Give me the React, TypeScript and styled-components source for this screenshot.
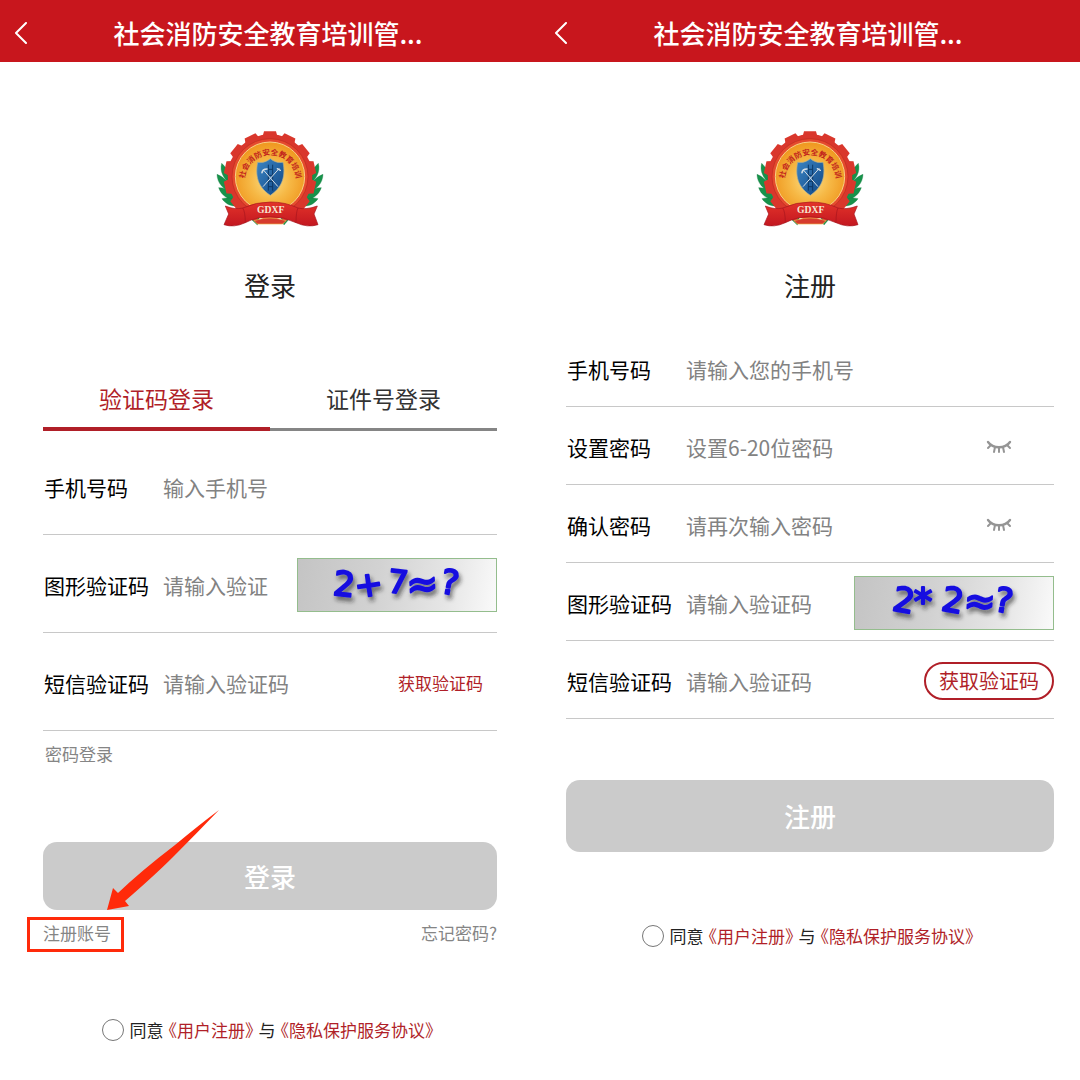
import React, { useId, useState } from 'react';
import styled, { createGlobalStyle } from 'styled-components';

const RED = '#c8161d';
const DEEP_RED = '#b01f28';
const MARK = '#ff2a0a';

const GlobalStyle = createGlobalStyle`
  *, *::before, *::after { box-sizing: border-box; }
  body {
    margin: 0;
    background: #fff;
    color: #222;
    font-family: "Noto Sans CJK SC", "Noto Sans", sans-serif;
  }
  button, input { font-family: inherit; margin: 0; }
`;

const Screens = styled.main`
  display: grid;
  grid-template-columns: 1fr 1fr;
  min-height: 100vh;
`;

const Screen = styled.section`
  display: flex;
  flex-direction: column;
  min-width: 0;
  background: #fff;
`;

const Header = styled.header`
  display: grid;
  grid-template-columns: 48px 1fr 52px;
  align-items: center;
  height: 62px;
  padding-top: 3px;
  background: ${RED};
  color: #fff;
`;

const BackButton = styled.button`
  display: flex;
  justify-content: flex-start;
  padding: 8px 14px;
  border: 0;
  background: none;
  color: inherit;
`;

const HeaderTitle = styled.h1`
  margin: 0;
  font-size: 26px;
  font-weight: 500;
  line-height: 36px;
  text-align: center;
  white-space: nowrap;
`;

const Body = styled.form<{ $gutter: number }>`
  display: flex;
  flex-direction: column;
  padding: 68px ${(p) => p.$gutter}px 0;
`;

const Emblem = styled.svg`
  display: block;
  align-self: center;
  width: 110px;
  height: 98px;
`;

const Title = styled.h2`
  margin: 39px 0 0;
  font-size: 26px;
  font-weight: 400;
  line-height: 36px;
  text-align: center;
`;

const Tabs = styled.div`
  display: grid;
  grid-template-columns: 1fr 1fr;
  align-items: end;
  margin: 73px 0 6px;
`;

const Tab = styled.button<{ $active: boolean }>`
  height: 55px;
  padding: 0 0 ${(p) => (p.$active ? 7 : 8)}px;
  border: 0;
  border-bottom: ${(p) => (p.$active ? `4px solid ${DEEP_RED}` : '3px solid #858585')};
  background: none;
  color: ${(p) => (p.$active ? DEEP_RED : '#333')};
  font-size: 23px;
  line-height: 44px;
`;

const Fields = styled.div<{ $top?: number }>`
  display: flex;
  flex-direction: column;
  margin-top: ${(p) => p.$top ?? 0}px;
`;

const Row = styled.div<{ $height: number }>`
  display: flex;
  align-items: center;
  height: ${(p) => p.$height}px;
  padding-top: 2px;
  border-bottom: 1px solid #c8c8c8;
`;

const FieldLabel = styled.label`
  flex: 0 0 120px;
  padding-left: 1px;
  color: #000;
  font-size: 21px;
  line-height: 32px;
  white-space: nowrap;
`;

const Field = styled.input`
  flex: 1 1 0;
  min-width: 0;
  height: 32px;
  padding: 0;
  border: 0;
  outline: 0;
  background: none;
  color: #222;
  font-size: 21px;
  line-height: 32px;
  &::placeholder { color: #828282; opacity: 1; }
`;

const CaptchaButton = styled.button`
  flex: none;
  width: 200px;
  height: 54px;
  margin: 0 0 0 26px;
  padding: 0;
  border: 1px solid #94bd8d;
  background: linear-gradient(100deg, #c4c4c4 0%, #d2d2d2 40%, #e6e6e6 75%, #fafafa 100%);
`;

const CaptchaArt = styled.svg`
  display: block;
  width: 100%;
  height: 100%;
`;

const TextButton = styled.button<{ $tone?: string }>`
  padding: 0;
  border: 0;
  background: none;
  color: ${(p) => p.$tone ?? '#858585'};
  font-size: 17px;
  line-height: 24px;
`;

const CodeLink = styled(TextButton)`
  margin-right: 14px;
`;

const PillButton = styled.button`
  width: 130px;
  height: 38px;
  padding: 0;
  border: 2px solid ${DEEP_RED};
  border-radius: 19px;
  background: #fff;
  color: ${DEEP_RED};
  font-size: 20px;
  line-height: 32px;
`;

const EyeButton = styled.button`
  display: flex;
  margin-right: 42px;
  padding: 0;
  border: 0;
  background: none;
  color: #959595;
`;

const PasswordLine = styled.div`
  display: flex;
  padding: 11px 2px 0;
`;

const Submit = styled.button<{ $top: number; $height: number }>`
  height: ${(p) => p.$height}px;
  margin-top: ${(p) => p.$top}px;
  padding: 0;
  border: 0;
  border-radius: 14px;
  background: #cbcbcb;
  color: #fff;
  font-size: 26px;
  font-weight: 500;
  line-height: 36px;
`;

const Links = styled.div`
  display: flex;
  justify-content: space-between;
  margin-top: 11px;
`;

const Marked = styled.div`
  position: relative;
  display: flex;
`;

const MarkBox = styled.span`
  position: absolute;
  inset: -4px -13px -7px -16px;
  border: 3px solid ${MARK};
  pointer-events: none;
`;

const MarkArrow = styled.svg`
  position: absolute;
  left: 62px;
  bottom: 34px;
  width: 116px;
  height: 102px;
  pointer-events: none;
`;

const TextLink = styled.a<{ $tone?: string }>`
  color: ${(p) => p.$tone ?? '#858585'};
  font-size: 17px;
  line-height: 24px;
  text-decoration: none;
`;

const Agreement = styled.div<{ $top: number }>`
  display: flex;
  align-items: center;
  justify-content: center;
  gap: 6px;
  margin-top: ${(p) => p.$top}px;
  height: 24px;
`;

const Tick = styled.input`
  appearance: none;
  flex: none;
  width: 22px;
  height: 22px;
  border: 1px solid #777;
  border-radius: 50%;
  background: #fff;
  &:checked { background: ${DEEP_RED}; }
`;

const AgreementText = styled.label`
  color: #222;
  font-size: 17px;
  line-height: 24px;
  white-space: nowrap;
  font-feature-settings: "halt";
`;

const Policy = styled.a`
  margin: 0 5px;
  color: ${DEEP_RED};
  text-decoration: none;
`;

function Logo() {
  const id = useId();
  const teeth = Array.from({ length: 14 }, (_, i) => (i * 360) / 14);
  const leaves = [
    'M63 130C80 146 90 166 92 196C70 178 56 156 63 130Z',
    'M49 163C72 172 88 190 96 218C68 210 50 190 49 163Z',
    'M54 203C76 202 96 214 108 240C82 240 62 226 54 203Z',
    'M64 236C84 230 106 236 120 256C96 262 76 254 64 236Z',
    'M84 158C96 172 100 190 96 210C82 194 78 176 84 158Z',
  ];
  return (
    <Emblem viewBox="43 30 330 294" role="img" aria-label="社会消防安全教育培训">
      <defs>
        <radialGradient id={`${id}gold`} cx="50%" cy="55%" r="52%">
          <stop offset="0" stopColor="#fbe08a" />
          <stop offset="0.55" stopColor="#f6b845" />
          <stop offset="1" stopColor="#f09a22" />
        </radialGradient>
        <linearGradient id={`${id}red`} x1="0" y1="0" x2="0" y2="1">
          <stop offset="0" stopColor="#e2332a" />
          <stop offset="1" stopColor="#c31720" />
        </linearGradient>
        <linearGradient id={`${id}blue`} x1="0" y1="0" x2="1" y2="1">
          <stop offset="0" stopColor="#3d86c4" />
          <stop offset="1" stopColor="#0f4685" />
        </linearGradient>
        <path id={`${id}arc`} d="M132 182A77 77 0 0 1 286 182" />
      </defs>
      <g fill="#17924a" stroke="#0f7a3c" strokeWidth="1">
        {leaves.map((d) => <path key={d} d={d} />)}
        <g transform="translate(416 0) scale(-1 1)">
          {leaves.map((d) => <path key={d} d={d} />)}
        </g>
        <path d="M150 296L176 292L170 315Z" />
        <path d="M266 296L240 292L250 315Z" />
      </g>
      <g fill="#d9372c">
        {teeth.map((a) => (
          <path key={a} d="M184 56L190 34H226L232 56Z" transform={`rotate(${a} 208 172)`} />
        ))}
      </g>
      <circle cx="208" cy="170" r="127" fill="#d9372c" />
      <circle cx="208" cy="170" r="114" fill="#e54a2e" stroke="#bd2c20" strokeWidth="2" />
      <circle cx="208" cy="170" r="104" fill={`url(#${id}gold)`} stroke="#f8d183" strokeWidth="3" />
      <text fill="#c3271d" fontFamily='"Noto Sans CJK SC", sans-serif' fontSize="23" fontWeight="700" textAnchor="middle">
        <textPath href={`#${id}arc`} startOffset="50%">社会消防安全教育培训</textPath>
      </text>
      <path
        d="M209 116C197 126 184 129 171 127C166 153 163 196 209 226C255 196 252 153 247 127C234 129 221 126 209 116Z"
        fill={`url(#${id}blue)`} stroke="#a9ae9a" strokeWidth="2"
      />
      <g fill="none" stroke="#0c3867" strokeWidth="3">
        <path d="M203 134V212M216 134V212M203 148H216M203 166H216M203 184H216M203 200H216" />
      </g>
      <g fill="none" stroke="#d5dfe6" strokeWidth="3" strokeLinecap="round">
        <path d="M190 152L231 199" />
        <path d="M235 146L188 199" />
        <path d="M184 158C185 151 190 147 199 147" strokeWidth="5" />
        <path d="M230 146L239 151" strokeWidth="4" />
      </g>
      <path d="M160 302Q208 286 256 302L246 312H170Z" fill="#d63b2e" stroke="#f0b04a" strokeWidth="2" />
      <path
        d="M74 258Q104 270 126 264Q166 246 210 246Q254 246 292 264Q316 270 350 258L340 282L352 314Q320 324 286 308Q250 290 210 290Q168 290 134 308Q100 324 70 314L84 282Z"
        fill={`url(#${id}red)`} stroke="#a5141c" strokeWidth="2" strokeLinejoin="round"
      />
      <path d="M126 264Q134 276 134 308M292 264Q286 276 286 308" fill="none" stroke="#a5141c" strokeWidth="2" />
      <text x="210" y="279" fill="#f6e6d4" fontFamily='"Liberation Serif", serif' fontSize="29" fontWeight="700" textAnchor="middle">
        GDXF
      </text>
    </Emblem>
  );
}

type Mark = { ch: string; x: number; y: number; turn: number; size: number };

function Captcha({ marks, label }: { marks: Mark[]; label: string }) {
  const id = useId();
  return (
    <CaptchaButton type="button" aria-label={label}>
      <CaptchaArt viewBox="0 0 198 52">
        <defs>
          <filter id={`${id}s`} x="-10%" y="-20%" width="120%" height="160%">
            <feDropShadow dx="2" dy="4" stdDeviation="2" floodColor="#222" floodOpacity="0.6" />
          </filter>
        </defs>
        <g
          filter={`url(#${id}s)`} fill="#1410e0" stroke="#1410e0" strokeWidth="2" strokeLinejoin="round"
          fontFamily='"DejaVu Sans", sans-serif' fontWeight="400" textAnchor="middle"
        >
          {marks.map((m) => (
            <text key={m.x} x={m.x} y={m.y} fontSize={m.size} transform={`rotate(${m.turn} ${m.x} ${m.y})`}>
              {m.ch}
            </text>
          ))}
        </g>
      </CaptchaArt>
    </CaptchaButton>
  );
}

const SUM: Mark[] = [
  { ch: '2', x: 45, y: 37, turn: 6, size: 34 },
  { ch: '+', x: 72, y: 37, turn: -8, size: 34 },
  { ch: '7', x: 99, y: 34, turn: 6, size: 32 },
  { ch: '≈', x: 125, y: 38, turn: -3, size: 38 },
  { ch: '?', x: 150, y: 35, turn: 10, size: 34 },
];

const PRODUCT: Mark[] = [
  { ch: '2', x: 47, y: 35, turn: 10, size: 34 },
  { ch: '*', x: 68, y: 38, turn: 0, size: 38 },
  { ch: '2', x: 96, y: 35, turn: 10, size: 34 },
  { ch: '≈', x: 124, y: 37, turn: 4, size: 38 },
  { ch: '?', x: 147, y: 35, turn: 10, size: 34 },
];

function TopBar() {
  return (
    <Header>
      <BackButton type="button" aria-label="返回">
        <svg width="14" height="22" viewBox="0 0 14 22" fill="none" stroke="currentColor" strokeWidth="2" strokeLinecap="round" strokeLinejoin="round">
          <path d="M12 1L2 11L12 21" />
        </svg>
      </BackButton>
      <HeaderTitle>社会消防安全教育培训管...</HeaderTitle>
    </Header>
  );
}

function ClosedEye() {
  return (
    <EyeButton type="button" aria-label="显示密码">
      <svg width="26" height="18" viewBox="0 0 26 18" fill="none" stroke="currentColor" strokeWidth="2.4" strokeLinecap="round">
        <path d="M2 4C7 11 19 11 24 4" />
        <path d="M5 7L2 10M9 9L8 14M13 10V14M17 9L18 14M21 7L24 10" strokeWidth="2" />
      </svg>
    </EyeButton>
  );
}

type FieldRowProps = {
  label: string;
  hint: string;
  height: number;
  type?: string;
  children?: React.ReactNode;
};

function FieldRow({ label, hint, height, type = 'text', children }: FieldRowProps) {
  const id = useId();
  return (
    <Row $height={height}>
      <FieldLabel htmlFor={id}>{label}</FieldLabel>
      <Field id={id} type={type} placeholder={hint} />
      {children}
    </Row>
  );
}

function Consent({ top }: { top: number }) {
  const id = useId();
  return (
    <Agreement $top={top}>
      <Tick id={id} type="checkbox" />
      <AgreementText htmlFor={id}>
        同意<Policy href="#terms">《用户注册》</Policy>与<Policy href="#privacy">《隐私保护服务协议》</Policy>
      </AgreementText>
    </Agreement>
  );
}

function LoginScreen() {
  const [tab, setTab] = useState(0);
  return (
    <Screen>
      <TopBar />
      <Body $gutter={43}>
        <Logo />
        <Title>登录</Title>
        <Tabs role="tablist">
          {['验证码登录', '证件号登录'].map((name, i) => (
            <Tab key={name} type="button" role="tab" aria-selected={tab === i} $active={tab === i} onClick={() => setTab(i)}>
              {name}
            </Tab>
          ))}
        </Tabs>
        <Fields>
          <FieldRow label="手机号码" hint="输入手机号" height={98} />
          <FieldRow label="图形验证码" hint="请输入验证" height={98}>
            <Captcha marks={SUM} label="刷新图形验证码" />
          </FieldRow>
          <FieldRow label="短信验证码" hint="请输入验证码" height={98}>
            <CodeLink type="button" $tone={DEEP_RED}>获取验证码</CodeLink>
          </FieldRow>
        </Fields>
        <PasswordLine>
          <TextButton type="button">密码登录</TextButton>
        </PasswordLine>
        <Submit type="button" $top={76} $height={68}>登录</Submit>
        <Links>
          <Marked>
            <TextLink href="#register">注册账号</TextLink>
            <MarkBox />
            <MarkArrow viewBox="0 0 116 102" aria-hidden="true">
              <path
                d="M114 1Q92 24 68 48Q50 66 20 92L24 97L2 101L8 79L13 84Q36 62 70 36Q94 16 114 1Z"
                fill={MARK}
              />
            </MarkArrow>
          </Marked>
          <TextLink href="#forgot">忘记密码?</TextLink>
        </Links>
        <Consent top={73} />
      </Body>
    </Screen>
  );
}

function RegisterScreen() {
  return (
    <Screen>
      <TopBar />
      <Body $gutter={26}>
        <Logo />
        <Title>注册</Title>
        <Fields $top={26}>
          <FieldRow label="手机号码" hint="请输入您的手机号" height={78} />
          <FieldRow label="设置密码" hint="设置6-20位密码" height={78} type="password">
            <ClosedEye />
          </FieldRow>
          <FieldRow label="确认密码" hint="请再次输入密码" height={78} type="password">
            <ClosedEye />
          </FieldRow>
          <FieldRow label="图形验证码" hint="请输入验证码" height={78}>
            <Captcha marks={PRODUCT} label="刷新图形验证码" />
          </FieldRow>
          <FieldRow label="短信验证码" hint="请输入验证码" height={78}>
            <PillButton type="button">获取验证码</PillButton>
          </FieldRow>
        </Fields>
        <Submit type="button" $top={61} $height={72}>注册</Submit>
        <Consent top={72} />
      </Body>
    </Screen>
  );
}

export default function App() {
  return (
    <>
      <GlobalStyle />
      <Screens>
        <LoginScreen />
        <RegisterScreen />
      </Screens>
    </>
  );
}
